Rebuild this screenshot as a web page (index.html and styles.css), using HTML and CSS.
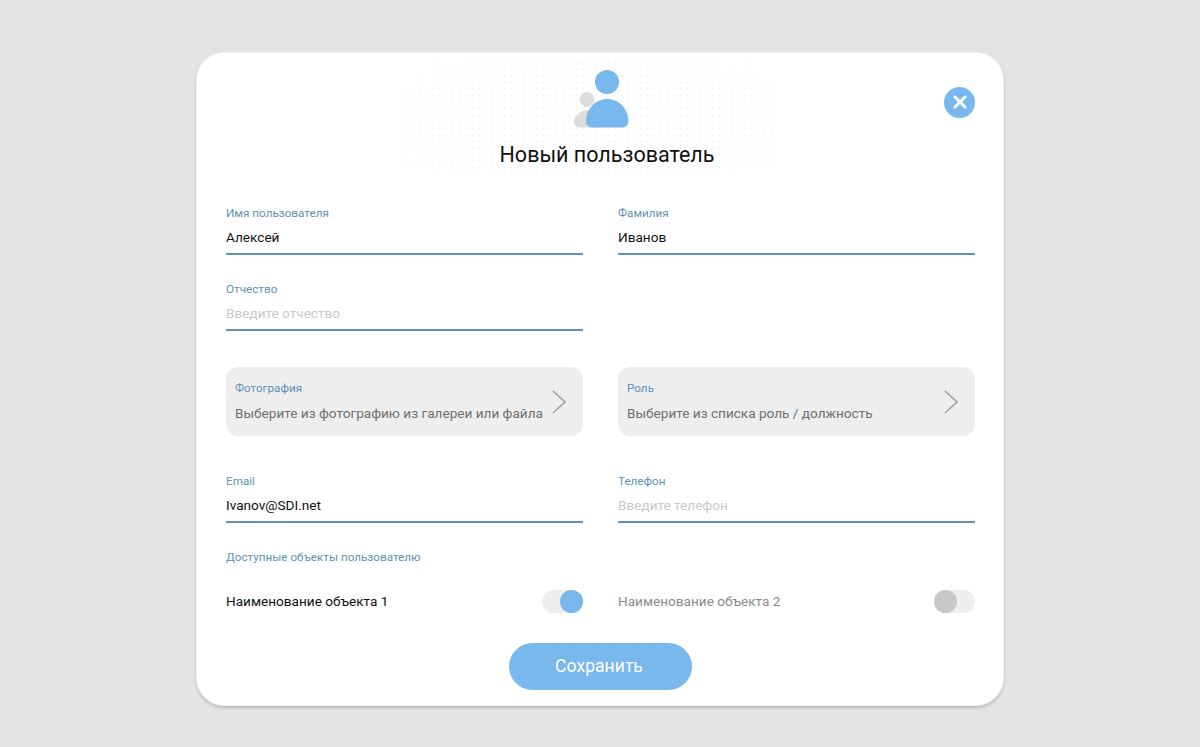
FILE: index.html
```html
<!DOCTYPE html>
<html lang="ru">
<head>
    <meta charset="UTF-8">
    <meta name="viewport" content="width=device-width, initial-scale=1.0">
    <title>Новый пользователь</title>
    <link rel="stylesheet" href="styles.css">
</head>
<body>
    <div class="card">
        <div class="header">
            <svg class="user-icon" width="55" height="58" viewBox="0 0 55 58">
                <circle cx="13" cy="29.5" r="7.4" fill="#dcdcdc"/>
                <path d="M5 57.5 a5 5 0 0 1 -5 -5 C0 46 6 40 14 40 C20 40 25 43 28 48 L28 57.5 Z" fill="#dcdcdc"/>
                <circle cx="33" cy="12" r="12" fill="#78b8ec"/>
                <path d="M18 57.5 a6 6 0 0 1 -6 -6 C12 39 21.5 29 33.2 29 C45 29 54.5 39 54.5 51.5 a6 6 0 0 1 -6 6 Z" fill="#78b8ec"/>
            </svg>
            <h1>Новый пользователь</h1>
            <button class="close" aria-label="Закрыть">
                <svg width="14" height="14" viewBox="0 0 14 14">
                    <path d="M2 2 L12 12 M12 2 L2 12" stroke="#fff" stroke-width="3" stroke-linecap="round"/>
                </svg>
            </button>
        </div>

        <div class="form-grid">
            <div class="field">
                <label>Имя пользователя</label>
                <div class="value">Алексей</div>
            </div>
            <div class="field">
                <label>Фамилия</label>
                <div class="value">Иванов</div>
            </div>
            <div class="field">
                <label>Отчество</label>
                <div class="value empty">Введите отчество</div>
            </div>
            <div></div>

            <div class="picker">
                <div>
                    <label>Фотография</label>
                    <div class="picker-text">Выберите из фотографию из галереи или файла</div>
                </div>
                <svg class="chevron" width="14" height="24" viewBox="0 0 14 24">
                    <path d="M1 1 L13 12 L1 23" fill="none" stroke="#a2a2a2" stroke-width="1.6"/>
                </svg>
            </div>
            <div class="picker">
                <div>
                    <label>Роль</label>
                    <div class="picker-text">Выберите из списка роль / должность</div>
                </div>
                <svg class="chevron" width="14" height="24" viewBox="0 0 14 24">
                    <path d="M1 1 L13 12 L1 23" fill="none" stroke="#a2a2a2" stroke-width="1.6"/>
                </svg>
            </div>

            <div class="field">
                <label>Email</label>
                <div class="value">Ivanov@SDI.net</div>
            </div>
            <div class="field">
                <label>Телефон</label>
                <div class="value empty">Введите телефон</div>
            </div>
        </div>

        <label>Доступные объекты пользователю</label>

        <div class="objects">
            <div class="object">
                <span>Наименование объекта 1</span>
                <div class="toggle on"><div class="knob"></div></div>
            </div>
            <div class="object off">
                <span>Наименование объекта 2</span>
                <div class="toggle"><div class="knob"></div></div>
            </div>
        </div>

        <div class="footer">
            <button class="save">Сохранить</button>
        </div>
    </div>
</body>
</html>
```

FILE: styles.css
```css
* {
    box-sizing: border-box;
}

body {
    margin: 0;
    height: 747px;
    background: #e4e4e4;
    font-family: Roboto, "Liberation Sans", sans-serif;
    overflow: hidden;
}

.card {
    width: 808px;
    height: 654px;
    margin: 52px auto 0;
    padding: 0 28px 0 29px;
    background: #fff;
    border: 1px solid #f2f2f2;
    border-radius: 28px;
    box-shadow: 0 2px 3px rgba(0,0,0,0.18);
}

.header {
    position: relative;
    height: 125px;
    margin-top: 7px;
    padding-top: 10px;
}

/* dotted backdrop behind the icon and title */
.header::before {
    content: "";
    position: absolute;
    left: 178px;
    top: 0;
    width: 372px;
    height: 118px;
    background-image: radial-gradient(circle, #e6e6e6 0.7px, transparent 1px);
    background-size: 6.5px 6.5px;
    -webkit-mask-image: radial-gradient(ellipse, #000 55%, transparent 100%);
    mask-image: radial-gradient(ellipse, #000 55%, transparent 100%);
}

.user-icon {
    position: relative;
    display: block;
    margin-left: 348px;
}

h1 {
    position: relative;
    margin: 14px 0 0;
    padding-left: 13px;
    font-size: 21.5px;
    font-weight: 400;
    line-height: 26px;
    text-align: center;
    color: #111;
}

.close {
    position: absolute;
    right: 0;
    top: 26.5px;
    width: 31px;
    height: 31px;
    padding: 0;
    border: none;
    border-radius: 50%;
    background: #78b8ec;
    display: flex;
    align-items: center;
    justify-content: center;
}

.form-grid {
    display: grid;
    grid-template-columns: 357px 357px;
    column-gap: 35px;
    margin-top: 21px;
}

label {
    display: block;
    font-size: 11.7px;
    line-height: 14px;
    color: #5f90b8;
}

.field {
    height: 76px;
}

.value {
    height: 35px;
    padding-top: 8px;
    border-bottom: 2px solid #5f90b8;
    font-size: 13.6px;
    line-height: 18px;
    color: #111;
}

.value.empty {
    color: #c8c8c8;
}

.picker {
    display: flex;
    justify-content: space-between;
    align-items: center;
    height: 69px;
    margin: 9px 0 38px;
    padding: 0 17px 0 9px;
    background: #eeeeee;
    border-radius: 12px;
}

.picker-text {
    margin-top: 9px;
    font-size: 13.6px;
    line-height: 18px;
    white-space: nowrap;
    color: #6e6e6e;
}

.objects {
    display: grid;
    grid-template-columns: 357px 357px;
    column-gap: 35px;
    margin-top: 25px;
}

.object {
    display: flex;
    justify-content: space-between;
    align-items: center;
    height: 24px;
    font-size: 13.6px;
    color: #111;
}

.object.off {
    color: #8a8a8a;
}

.toggle {
    display: flex;
    width: 41px;
    height: 23px;
    background: #eeeeee;
    border-radius: 12px;
}

.toggle.on {
    justify-content: flex-end;
}

.knob {
    width: 23px;
    height: 23px;
    border-radius: 50%;
    background: #c8c8c8;
}

.toggle.on .knob {
    background: #78b8ec;
}

.footer {
    display: flex;
    justify-content: center;
    margin-top: 30px;
}

.save {
    width: 183px;
    height: 47px;
    padding: 0 3px 2px 0;
    border: none;
    border-radius: 24px;
    background-color: #78b8ec;
    background-image: radial-gradient(circle, rgba(255,255,255,0.14) 0.7px, transparent 1px);
    background-size: 5px 5px;
    font-family: inherit;
    font-size: 17.6px;
    color: #fff;
}
```
